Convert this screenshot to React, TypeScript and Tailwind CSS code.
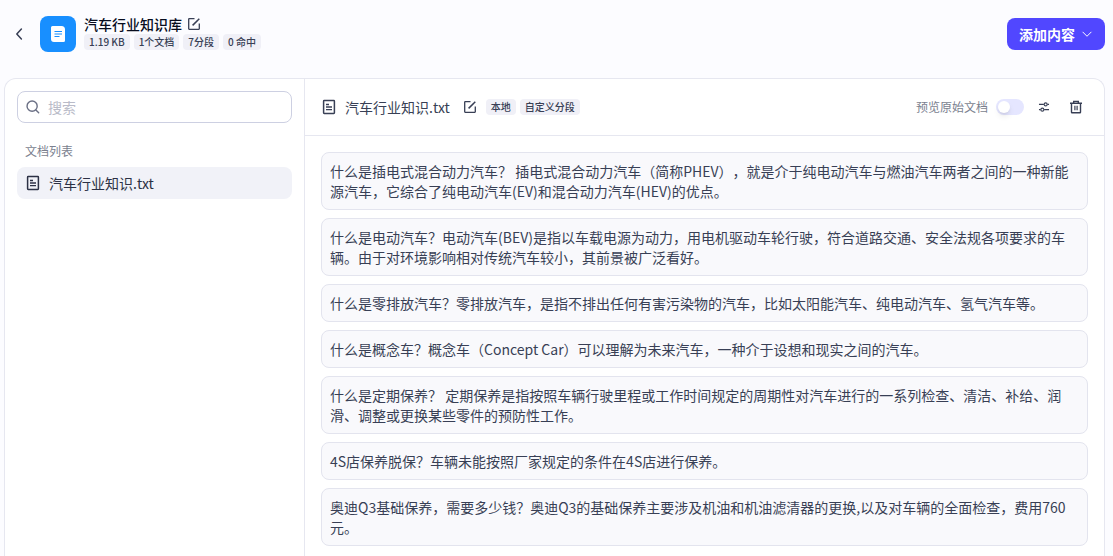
import type { ReactNode } from "react";

const stats = ["1.19 KB", "1个文档", "7分段", "0 命中"];

const documents = [{ id: 1, name: "汽车行业知识.txt", tags: ["本地", "自定义分段"] }];

const segments = [
	"什么是插电式混合动力汽车？ 插电式混合动力汽车（简称PHEV），就是介于纯电动汽车与燃油汽车两者之间的一种新能源汽车，它综合了纯电动汽车(EV)和混合动力汽车(HEV)的优点。",
	"什么是电动汽车？电动汽车(BEV)是指以车载电源为动力，用电机驱动车轮行驶，符合道路交通、安全法规各项要求的车辆。由于对环境影响相对传统汽车较小，其前景被广泛看好。",
	"什么是零排放汽车？零排放汽车，是指不排出任何有害污染物的汽车，比如太阳能汽车、纯电动汽车、氢气汽车等。",
	"什么是概念车？概念车（Concept Car）可以理解为未来汽车，一种介于设想和现实之间的汽车。",
	"什么是定期保养？ 定期保养是指按照车辆行驶里程或工作时间规定的周期性对汽车进行的一系列检查、清洁、补给、润滑、调整或更换某些零件的预防性工作。",
	"4S店保养脱保？车辆未能按照厂家规定的条件在4S店进行保养。",
	"奥迪Q3基础保养，需要多少钱？奥迪Q3的基础保养主要涉及机油和机油滤清器的更换,以及对车辆的全面检查，费用760元。",
];

type IconProps = { className?: string; strokeWidth?: number; children: ReactNode };

function Icon({ className = "size-4", strokeWidth = 1.4, children }: IconProps) {
	return (
		<svg
			viewBox="0 0 16 16"
			fill="none"
			stroke="currentColor"
			strokeWidth={strokeWidth}
			className={`shrink-0 ${className}`}
			aria-hidden="true"
		>
			{children}
		</svg>
	);
}

function EditIcon() {
	return (
		<Icon strokeWidth={1.3}>
			<path d="M8.5 2.7H3.2a.5.5 0 0 0-.5.5v9.6c0 .3.2.5.5.5h9.6c.3 0 .5-.2.5-.5V7.5" />
			<path d="M6.6 9.4 13.3 2.7" strokeWidth="1.5" />
		</Icon>
	);
}

function DocIcon() {
	return (
		<Icon strokeWidth={1.5}>
			<rect x="2.6" y="1.6" width="10.8" height="12.8" rx=".6" />
			<path d="M5 5.5h3M5 8h6M5 10.7h6" strokeWidth="1.3" />
		</Icon>
	);
}

function Tag({ children }: { children: ReactNode }) {
	return (
		<span className="h-4 rounded bg-[#f0f0f7] px-[5px] text-[10px] font-medium leading-4 text-[#383f55] whitespace-nowrap">
			{children}
		</span>
	);
}

function Header() {
	return (
		<header className="flex shrink-0 items-center justify-between pt-3.5 pb-6 pl-3 pr-2">
			<div className="flex items-center">
				<button type="button" aria-label="返回" className="text-[#383f55]">
					<Icon strokeWidth={1.5}>
						<path d="M9.4 3 4.8 8l4.6 5" strokeLinecap="round" strokeLinejoin="round" />
					</Icon>
				</button>
				<div className="ml-3 flex size-9 items-center justify-center rounded-lg bg-[#188fff]">
					<svg viewBox="0 0 16 18" className="h-[18px] w-4" aria-hidden="true">
						<path
							fill="#fff"
							d="M2.5 1h9A3.5 3.5 0 0 1 15 4.5v11a1.5 1.5 0 0 1-1.5 1.5H4a3 3 0 0 1-3-3V2.500A1.500 1.500 0 0 1 2.500 1Z"
						/>
						<path d="M4.500 6.500h7.500M4.500 9h7.500M4.500 11.500h5" stroke="#188fff" strokeWidth="1.100" />
					</svg>
				</div>
				<div className="ml-2 pb-1">
					<div className="flex h-5 items-center gap-1 text-[#383f55]">
						<h1 className="text-sm leading-5 font-medium text-[#080d1e]">汽车行业知识库</h1>
						<button type="button" aria-label="编辑">
							<EditIcon />
						</button>
					</div>
					<div className="flex gap-1">
						{stats.map((stat) => (
							<Tag key={stat}>{stat}</Tag>
						))}
					</div>
				</div>
			</div>
			<button
				type="button"
				className="flex h-8 items-center gap-1.5 rounded-lg bg-[#5147ff] px-3 text-sm font-bold text-white"
			>
				添加内容
				<Icon className="size-3" strokeWidth={1.3}>
					<path d="m2.500 5.500 5.500 5.500 5.500-5.500" strokeLinecap="round" strokeLinejoin="round" />
				</Icon>
			</button>
		</header>
	);
}

function Sidebar() {
	return (
		<aside className="w-[300px] shrink-0 border-r border-[#e6e7f0] p-3">
			<label className="flex h-8 items-center gap-2 rounded-lg border border-[#cdd0e2] px-2 text-[#6b7085]">
				<Icon className="size-3.5" strokeWidth={1.6}>
					<circle cx="7" cy="7" r="5.800" />
					<path d="m11.300 11.300 3.200 3.200" strokeLinecap="round" />
				</Icon>
				<input
					type="text"
					aria-label="搜索"
					placeholder="搜索"
					className="w-full bg-transparent text-sm outline-none placeholder:text-[#b9bbc8]"
				/>
			</label>
			<h2 className="mt-5 mb-2 px-2 text-xs leading-4 text-[#7b7f8f]">文档列表</h2>
			<ul>
				{documents.map(({ id, name }) => (
					<li key={id}>
						<button
							type="button"
							className="flex h-8 w-full items-center gap-2 rounded-lg bg-[#f1f2f8] px-2 text-sm text-[#2c3145]"
						>
							<DocIcon />
							{name}
						</button>
					</li>
				))}
			</ul>
		</aside>
	);
}

function Toolbar() {
	const { name, tags } = documents[0];

	return (
		<div className="flex h-[57px] shrink-0 items-center justify-between border-b border-[#e6e7f0] px-4 text-[#383f55]">
			<div className="flex items-center">
				<DocIcon />
				<span className="ml-2 text-sm">{name}</span>
				<button type="button" aria-label="重命名" className="ml-3 mr-2">
					<EditIcon />
				</button>
				<div className="flex gap-1">
					{tags.map((tag) => (
						<Tag key={tag}>{tag}</Tag>
					))}
				</div>
			</div>
			<div className="flex items-center gap-2">
				<label className="flex items-center gap-2 text-xs text-[#7b7f8f]">
					预览原始文档
					<input
						type="checkbox"
						role="switch"
						className="h-4 w-7 appearance-none rounded-full bg-[#e5e6ff] p-0.5 before:block before:size-3 before:rounded-full before:bg-white before:shadow-md checked:bg-[#5147ff] checked:before:ml-3"
					/>
				</label>
				<button type="button" aria-label="设置" className="flex size-6 items-center justify-center">
					<Icon className="size-3" strokeWidth={1.5}>
						<path d="M1.300 4.500h6.500M12.500 4.500h2.200M1.300 11.500h2.200M8.200 11.500h6.500" />
						<circle cx="10.200" cy="4.500" r="2" />
						<circle cx="5.800" cy="11.500" r="2" />
					</Icon>
				</button>
				<button type="button" aria-label="删除" className="flex size-6 items-center justify-center">
					<Icon>
						<path d="M2 4.200h12M5.700 4V2.400h4.600V4M3.500 4.500v8.800c0 .3.200.5.500.5h8c.3 0 .5-.2.500-.5V4.500" />
						<path d="M6.900 6.700v4.600M9.100 6.700v4.600" strokeWidth="1.200" />
					</Icon>
				</button>
			</div>
		</div>
	);
}

function App() {
	return (
		<div className="flex h-screen flex-col overflow-hidden bg-[#fcfcff] font-['Noto_Sans_CJK_SC',sans-serif] [text-spacing-trim:space-all]">
			<Header />
			<main className="ml-1 mr-2 flex min-h-0 flex-1 rounded-t-xl border border-b-0 border-[#e6e7f0] bg-white">
				<Sidebar />
				<section className="flex min-w-0 flex-1 flex-col">
					<Toolbar />
					<div className="flex flex-col gap-2 overflow-y-auto px-4 pt-4 pb-2">
						{segments.map((segment) => (
							<p
								key={segment}
								className="rounded-lg border border-[#e3e4ee] bg-[#f9f9fc] p-2 text-sm leading-5 text-[#383f55]"
							>
								{segment}
							</p>
						))}
					</div>
				</section>
			</main>
		</div>
	);
}

export default App;
